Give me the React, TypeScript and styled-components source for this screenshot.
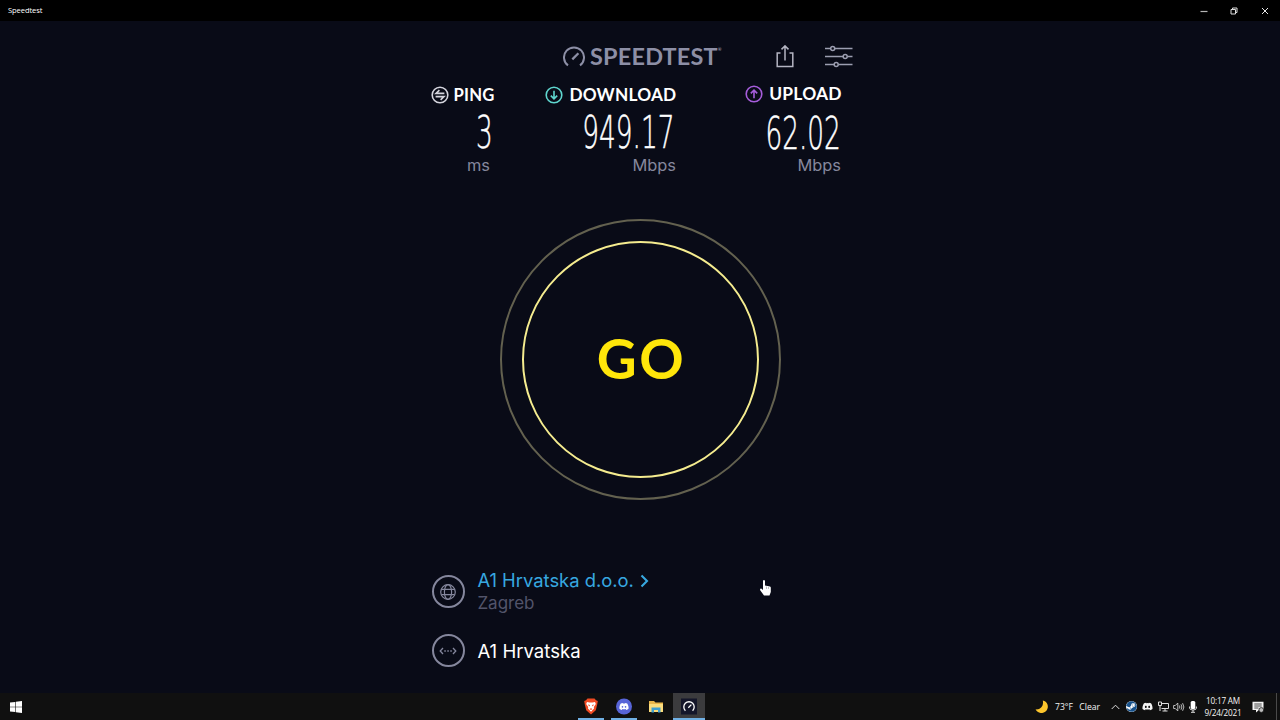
import React from "react";
import styled, { createGlobalStyle } from "styled-components";
import { FaDiscord, FaSteam } from "react-icons/fa";

const GlobalStyle = createGlobalStyle`
  body {
    margin: 0;
    background: #090b17;
    overflow: hidden;
  }
  * {
    box-sizing: border-box;
  }
  svg {
    display: block;
    flex-shrink: 0;
  }
`;

const Window = styled.div`
  position: relative;
  display: flex;
  flex-direction: column;
  width: 1280px;
  height: 720px;
  background: #090b17;
  font-family: Inter, "Liberation Sans", sans-serif;
`;

const TitleBar = styled.div`
  display: flex;
  justify-content: space-between;
  align-items: center;
  height: 21px;
  padding: 0 11.5px 0 8px;
  background: #000;
`;

const Title = styled.span`
  font-family: "Open Sans", sans-serif;
  font-size: 7.6px;
  line-height: 21px;
  letter-spacing: -0.1px;
  color: #fff;
`;

const WindowControls = styled.div`
  display: flex;
  align-items: center;
  gap: 22.5px;
`;

const Main = styled.main`
  display: flex;
  flex-direction: column;
  align-items: center;
  flex: 1;
  padding-top: 20px;
`;

const Header = styled.header`
  display: flex;
  justify-content: flex-end;
  align-items: center;
  width: 426px;
  height: 32px;
`;

const LogoText = styled.span`
  display: flex;
  width: 130px;
  margin-left: 5px;
  font-family: Lato, sans-serif;
  font-size: 22px;
  font-weight: 700;
  line-height: 30px;
  letter-spacing: 0.2px;
  color: #8d8fa6;
  white-space: nowrap;
  transform: scaleX(1.065);
  transform-origin: left center;
`;

const Trademark = styled.span`
  font-size: 4px;
  line-height: 16px;
`;

const HeaderIcons = styled.div`
  display: flex;
  align-items: center;
  gap: 31px;
  margin-left: 56px;
`;

const Metrics = styled.section`
  display: flex;
  width: 418px;
  margin-top: 11px;
`;

const Metric = styled.div<{ $width: number; $gap: number }>`
  display: flex;
  flex-direction: column;
  align-items: flex-end;
  width: ${props => props.$width}px;
  margin-left: ${props => props.$gap}px;
`;

const MetricLabel = styled.div<{ $raised?: boolean }>`
  display: flex;
  justify-content: space-between;
  align-items: center;
  width: 100%;
  height: ${props => (props.$raised ? 20 : 21)}px;
`;

const MetricName = styled.span<{ $stretch: number }>`
  font-family: Lato, sans-serif;
  font-size: 16.5px;
  font-weight: 700;
  letter-spacing: 0.2px;
  color: #fff;
  transform: scaleX(${props => props.$stretch});
  transform-origin: right center;
`;

const MetricValue = styled.div<{ $raised?: boolean }>`
  height: 42px;
  margin-top: ${props => (props.$raised ? 8 : 6)}px;
  margin-right: ${props => (props.$raised ? 1 : 2)}px;
  font-family: "DejaVu Sans", sans-serif;
  font-size: 45px;
  font-weight: 200;
  line-height: 43px;
  color: #fff;
  -webkit-text-stroke: 0.5px #fff;
  transform: scaleX(0.585);
  transform-origin: right center;
  white-space: nowrap;
`;

const MetricUnit = styled.div<{ $inset?: number; $raised?: boolean }>`
  height: 22px;
  margin-top: ${props => (props.$raised ? 0 : 1)}px;
  margin-right: ${props => props.$inset || 0}px;
  font-size: 16.4px;
  line-height: 22px;
  color: #85879d;
`;

const GoButton = styled.button`
  display: flex;
  justify-content: center;
  align-items: center;
  width: 281px;
  height: 281px;
  margin: 43px 0 0 1px;
  padding: 0;
  border: 2px solid #63614f;
  border-radius: 50%;
  background: none;
`;

const GoRing = styled.span`
  display: flex;
  justify-content: center;
  align-items: center;
  width: 237px;
  height: 237px;
  padding: 0 0 3px 2px;
  border: 2px solid #f5ec8f;
  border-radius: 50%;
  font-family: Lato, sans-serif;
  font-size: 55px;
  font-weight: 700;
  letter-spacing: 2.5px;
  color: #ffe60a;
`;

const Connections = styled.section`
  display: flex;
  flex-direction: column;
  gap: 26px;
  width: 418px;
  margin-top: 75px;
`;

const Connection = styled.div`
  display: flex;
  align-items: center;
  height: 33px;
`;

const RoundIcon = styled.div`
  display: flex;
  justify-content: center;
  align-items: center;
  width: 33px;
  height: 33px;
  margin: 0 12.9px 0 0.5px;
  border: 2px solid #85879d;
  border-radius: 50%;
`;

const ConnectionText = styled.div`
  display: flex;
  flex-direction: column;
`;

const ServerLink = styled.a`
  display: flex;
  align-items: center;
  gap: 6px;
  font-size: 18.4px;
  line-height: 23px;
  color: #37a8e0;
`;

const City = styled.span`
  font-size: 17px;
  line-height: 22px;
  color: #52546a;
`;

const Provider = styled.span`
  font-size: 18.6px;
  line-height: 24px;
  color: #fff;
`;

const Pointer = styled.svg`
  position: absolute;
  left: 759px;
  top: 579px;
`;

const Taskbar = styled.footer`
  display: grid;
  grid-template-columns: 1fr auto 1fr;
  height: 27px;
  background: #101010;
  font-family: "Open Sans", sans-serif;
`;

const StartButton = styled.div`
  display: flex;
  align-items: center;
  padding-left: 10px;
`;

const Apps = styled.div`
  display: flex;
  gap: 0.7px;
`;

const TaskbarApp = styled.div<{ $open?: boolean; $active?: boolean }>`
  display: flex;
  flex-direction: column;
  justify-content: space-between;
  align-items: center;
  width: 32px;
  height: 27px;
  padding-top: 5px;
  background: ${props => (props.$active ? "#3b3b3d" : "none")};

  &::after {
    content: "";
    width: ${props => (props.$active ? 32 : 26)}px;
    height: 2px;
    background: ${props => (props.$open ? "#70b0e4" : "none")};
  }
`;

const Tray = styled.div`
  display: flex;
  justify-content: flex-end;
  align-items: center;
  padding-right: 3px;
  color: #f4f4f4;
`;

const TrayItem = styled.div<{ $width: number; $gap: number }>`
  display: flex;
  justify-content: center;
  width: ${props => props.$width}px;
  margin-right: ${props => props.$gap}px;
`;

const Weather = styled.div`
  display: flex;
  justify-content: space-between;
  width: 45px;
  margin-right: 11px;
  font-size: 8.6px;
  white-space: nowrap;
`;

const Clock = styled.div`
  display: flex;
  flex-direction: column;
  align-items: center;
  width: 36px;
  margin-right: 11px;
  font-size: 8.2px;
  line-height: 12px;
  letter-spacing: -0.2px;
  white-space: nowrap;
`;

const SteamDisc = styled.div`
  display: flex;
  width: 11px;
  height: 11px;
  border-radius: 50%;
  background: #fff;
  color: #17528c;
`;

const ShowDesktop = styled.div`
  width: 1px;
  height: 27px;
  background: #4a4a4a;
`;

const GaugeIcon = () => (
  <svg width="22" height="22" viewBox="0 0 22 22" fill="none" stroke="#8d8fa6" strokeWidth="2">
    <path d="M5 19.4A10 10 0 1 1 17 19.4" />
    <path d="M9.3 13.4L15.4 7.3" strokeWidth="2.3" />
  </svg>
);

const CircleIcon = ({ color, children }: { color: string; children: React.ReactNode }) => (
  <svg width="18" height="18" viewBox="0 0 18 18" fill="none" stroke={color} strokeWidth="1.6">
    <circle cx="9" cy="9" r="7.8" />
    {children}
  </svg>
);

const App = () => {
    return <Window>
        <GlobalStyle />
        <TitleBar>
            <Title>Speedtest</Title>
            <WindowControls>
                <svg width="8" height="8" viewBox="0 0 8 8"><path d="M.5 4.5H7.5" stroke="#b5b5b5" strokeWidth="1.2" /></svg>
                <svg width="8" height="8" viewBox="0 0 8 8" fill="none" stroke="#ddd">
                    <path d="M1 2.5H5.5V7H1ZM2.5 2.5V1H7V5.5H5.5" />
                </svg>
                <svg width="8" height="8" viewBox="0 0 8 8"><path d="M1 1L7 7M7 1L1 7" stroke="#e8e8e8" /></svg>
            </WindowControls>
        </TitleBar>
        <Main>
            <Header>
                <GaugeIcon />
                <LogoText>SPEEDTEST<Trademark>®</Trademark></LogoText>
                <HeaderIcons>
                    <svg width="18" height="24" viewBox="0 0 18 24" fill="none" stroke="#b4b5c2" strokeWidth="1.5">
                        <path d="M4.5 8H1.2V21.5H16.8V8H13.5M9 15.5V1M5.5 4.4L9 .9L12.5 4.4" />
                    </svg>
                    <svg width="28" height="24" viewBox="0 0 28 24" fill="none" stroke="#9c9eb1" strokeWidth="1.5">
                        <path d="M0 3.5H5.5M10 3.5H27.5M0 11.5H18M22.5 11.5H27.5M0 19.5H9M13.5 19.5H27.5" />
                        <circle cx="7.7" cy="3.5" r="2" />
                        <circle cx="20.2" cy="11.5" r="2" />
                        <circle cx="11.2" cy="19.5" r="2" />
                    </svg>
                </HeaderIcons>
            </Header>
            <Metrics>
                <Metric $width={64} $gap={0}>
                    <MetricLabel>
                        <CircleIcon color="#d5d5de">
                            <path d="M13.4 7.4H5L8.4 4.1M4.6 10.6H13L9.6 13.9" />
                        </CircleIcon>
                        <MetricName $stretch={1.01}>PING</MetricName>
                    </MetricLabel>
                    <MetricValue>3</MetricValue>
                    <MetricUnit $inset={5}>ms</MetricUnit>
                </Metric>
                <Metric $width={131} $gap={50}>
                    <MetricLabel>
                        <CircleIcon color="#5fd6cf">
                            <path d="M9 4.8V12.6M5.8 9.6L9 12.8L12.2 9.6" />
                        </CircleIcon>
                        <MetricName $stretch={1.045}>DOWNLOAD</MetricName>
                    </MetricLabel>
                    <MetricValue>949.17</MetricValue>
                    <MetricUnit>Mbps</MetricUnit>
                </Metric>
                <Metric $width={97} $gap={69}>
                    <MetricLabel $raised>
                        <CircleIcon color="#a65ddb">
                            <path d="M9 13.2V5.4M5.8 8.4L9 5.2L12.2 8.4" />
                        </CircleIcon>
                        <MetricName $stretch={1.055}>UPLOAD</MetricName>
                    </MetricLabel>
                    <MetricValue $raised>62.02</MetricValue>
                    <MetricUnit $raised $inset={1}>Mbps</MetricUnit>
                </Metric>
            </Metrics>
            <GoButton>
                <GoRing>GO</GoRing>
            </GoButton>
            <Connections>
                <Connection>
                    <RoundIcon>
                        <svg width="16" height="16" viewBox="0 0 16 16" fill="none" stroke="#85879d" strokeWidth="1.2">
                            <circle cx="8" cy="8" r="7.3" />
                            <ellipse cx="8" cy="8" rx="3.6" ry="7.3" />
                            <path d="M1.4 5.3H14.6M1.4 10.7H14.6" />
                        </svg>
                    </RoundIcon>
                    <ConnectionText>
                        <ServerLink>
                            A1 Hrvatska d.o.o.
                            <svg width="9" height="14" viewBox="0 0 9 14" fill="none" stroke="#37a8e0" strokeWidth="2.1">
                                <path d="M1.5 1.5L7 7L1.5 12.5" />
                            </svg>
                        </ServerLink>
                        <City>Zagreb</City>
                    </ConnectionText>
                </Connection>
                <Connection>
                    <RoundIcon>
                        <svg width="18" height="8" viewBox="0 0 18 8" fill="none" stroke="#85879d" strokeWidth="1.3">
                            <path d="M4 1L1.2 4L4 7M14 1L16.8 4L14 7" />
                            <path d="M5.3 4H13" strokeWidth="1.5" strokeDasharray="1.5 1.5" />
                        </svg>
                    </RoundIcon>
                    <Provider>A1 Hrvatska</Provider>
                </Connection>
            </Connections>
        </Main>
        <Taskbar>
            <StartButton>
                <svg width="12" height="12" viewBox="0 0 12 12" fill="#fff">
                    <path d="M0 1.6L5.3 .9V5.7H0ZM5.9 .8L12 0V5.7H5.9ZM0 6.3H5.3V11.1L0 10.4ZM5.9 6.3H12V12L5.9 11.2Z" />
                </svg>
            </StartButton>
            <Apps>
                <TaskbarApp $open>
                    <svg width="16" height="17" viewBox="0 0 16 17">
                        <path d="M4.5 .6H11.5L13 2.2L14.8 3L14.3 6L12.8 12.2L8 16.4L3.2 12.2L1.7 6L1.2 3L3 2.2Z" fill="#ef4a23" />
                        <path d="M4 4L6.5 4.4H9.5L12 4L12.8 6L10.8 9L11 10.4L8 13.8L5 10.4L5.2 9L3.2 6Z" fill="#fff" />
                        <path d="M4.8 6.4L7 7L6.4 8.4ZM11.2 6.4L9 7L9.6 8.4ZM6.5 11L8 10.2L9.5 11L8 12Z" fill="#ef4a23" />
                    </svg>
                </TaskbarApp>
                <TaskbarApp $open>
                    <svg width="16" height="17" viewBox="0 0 16 17">
                        <circle cx="8" cy="8.5" r="8" fill="#5865d8" />
                        <FaDiscord x="3" y="3.5" size={10} color="#fff" />
                    </svg>
                </TaskbarApp>
                <TaskbarApp>
                    <svg width="16" height="17" viewBox="0 0 16 17">
                        <path d="M1 3H6L7.5 4.5H15V14H1Z" fill="#e9b64b" />
                        <path d="M1 6H15V14H1Z" fill="#fbdc7c" />
                        <path d="M3.5 9.5H12.5V14.5H10V12H6V14.5H3.5Z" fill="#3f9fd0" />
                    </svg>
                </TaskbarApp>
                <TaskbarApp $open $active>
                    <svg width="16" height="17" viewBox="0 0 16 17">
                        <rect y=".5" width="16" height="16" fill="#14162a" />
                        <path d="M4.4 12.7A5.2 5.2 0 1 1 11.6 12.7M7.3 9.8L10.4 6.6" fill="none" stroke="#fff" strokeWidth="1.3" />
                    </svg>
                </TaskbarApp>
            </Apps>
            <Tray>
                <TrayItem $width={14} $gap={7}>
                    <svg width="13" height="13" viewBox="0 0 13 13">
                        <path d="M7.8 .4A6.4 6.4 0 1 1 .6 9.3C5 10 9 6.4 7.8 .4Z" fill="#fcc52c" />
                    </svg>
                </TrayItem>
                <Weather><span>73°F</span><span>Clear</span></Weather>
                <TrayItem $width={9} $gap={5}>
                    <svg width="9" height="6" viewBox="0 0 9 6" fill="none" stroke="#ddd"><path d="M.7 5L4.5 1.2L8.3 5" /></svg>
                </TrayItem>
                <TrayItem $width={12} $gap={5}>
                    <SteamDisc><FaSteam size={11} /></SteamDisc>
                </TrayItem>
                <TrayItem $width={11} $gap={5}><FaDiscord size={11} /></TrayItem>
                <TrayItem $width={11} $gap={4}>
                    <svg width="11" height="11" viewBox="0 0 11 11" fill="none" stroke="#ddd">
                        <path d="M3 2.5H10.5V7.5H3.5M7 7.5V10M4.5 10H9.5M.5 1H3.5V4.5H.5ZM2 4.5V10" />
                    </svg>
                </TrayItem>
                <TrayItem $width={12} $gap={4}>
                    <svg width="12" height="10" viewBox="0 0 12 10" fill="none" stroke="#ccc" strokeWidth=".9">
                        <path d="M.6 3.5H2.3L4.8 1V9L2.3 6.5H.6ZM6.4 3.5Q7.4 5 6.4 6.5M8 2.3Q9.8 5 8 7.7M9.6 1.2Q12.2 5 9.6 8.8" />
                    </svg>
                </TrayItem>
                <TrayItem $width={8} $gap={8}>
                    <svg width="8" height="12" viewBox="0 0 8 12">
                        <rect x="1.7" y="0" width="4.6" height="8" rx="1.5" fill="#fff" />
                        <path d="M.6 5.5V7Q.6 9 4 9Q7.4 9 7.4 7V5.5M4 9V11M2 11.3H6" fill="none" stroke="#ddd" />
                    </svg>
                </TrayItem>
                <Clock><span>10:17 AM</span><span>9/24/2021</span></Clock>
                <TrayItem $width={12} $gap={12}>
                    <svg width="12" height="12" viewBox="0 0 12 12">
                        <path d="M.5 .8H11.5V9H7L4 11.5V9H.5Z" fill="#f2f2f2" />
                        <path d="M2.3 3H9.7M2.3 5H9.7M2.3 7H6.5" stroke="#222" strokeWidth=".8" />
                        <circle cx="9.3" cy="9" r="2.4" fill="#bbb" stroke="#101010" strokeWidth=".7" />
                    </svg>
                </TrayItem>
                <ShowDesktop />
            </Tray>
        </Taskbar>
        <Pointer width="13" height="18" viewBox="0 0 13 18">
            <path d="M4 1.5Q5.5 .5 6 2V6.5L11 7.5Q12 8 11.8 9.5V13L10.5 16.5H5L1.2 11.2Q.6 9.5 2.2 9.6L4 11Z" fill="#fff" />
            <path d="M7.5 7.5V10M9.5 8V10" stroke="#999" strokeWidth=".6" />
        </Pointer>
    </Window>
}

export default App;
